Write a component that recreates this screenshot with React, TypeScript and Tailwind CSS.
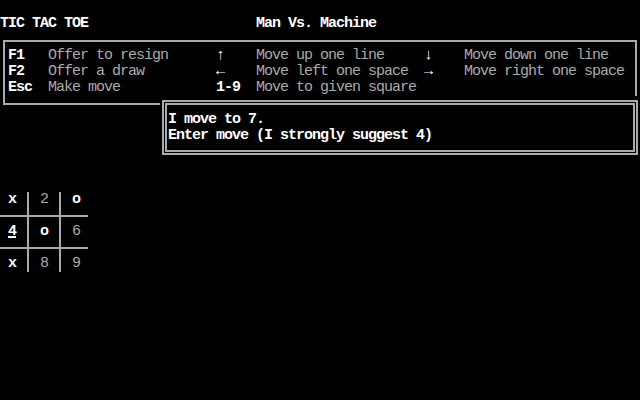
import * as React from 'react';

const GRAY = 'text-[#aaaaaa]';

const helpRows: [string, string, string, string, string, string][] = [
  ['F1', 'Offer to resign', '↑', 'Move up one line', '↓', 'Move down one line'],
  ['F2', 'Offer a draw', '←', 'Move left one space', '→', 'Move right one space'],
  ['Esc', 'Make move', '1-9', 'Move to given square', '', ''],
];

type Mark = { ch: string; lit: boolean; under?: boolean };

const board: Mark[][] = [
  [{ ch: 'x', lit: true }, { ch: '2', lit: false }, { ch: 'o', lit: true }],
  [{ ch: '4', lit: true, under: true }, { ch: 'o', lit: true }, { ch: '6', lit: false }],
  [{ ch: 'x', lit: true }, { ch: '8', lit: false }, { ch: '9', lit: false }],
];

const Sep: React.FC<{ cross?: boolean }> = ({ cross }) => (
  <div className="relative w-2 h-4 flex justify-center">
    <div className="w-[2px] h-full bg-[#aaaaaa]" />
    {cross && <div className="absolute left-0 right-0 top-[7px] h-[2px] bg-[#aaaaaa]" />}
  </div>
);

const LineRow: React.FC = () => (
  <div className="flex">
    <div className="w-6 h-4 flex items-center"><div className="w-full h-[2px] bg-[#aaaaaa]" /></div>
    <Sep cross />
    <div className="w-6 h-4 flex items-center"><div className="w-full h-[2px] bg-[#aaaaaa]" /></div>
    <Sep cross />
    <div className="w-6 h-4 flex items-center"><div className="w-full h-[2px] bg-[#aaaaaa]" /></div>
  </div>
);

const Cell: React.FC<{ m: Mark }> = ({ m }) => (
  <div className={`w-6 h-4 text-center ${m.lit ? 'text-white font-bold' : GRAY}`}>
    <span className={m.under ? 'underline decoration-2 underline-offset-[1px]' : ''}>{m.ch}</span>
  </div>
);

export default function App() {
  return (
    <div
      className="w-[640px] h-[400px] bg-black overflow-hidden pt-4 text-[15px] leading-[16px] tracking-[-1px] whitespace-pre"
      style={{ fontFamily: '"Liberation Mono", "DejaVu Sans Mono", monospace' }}
    >
      <div className="flex h-4 text-white font-bold">
        <span className="w-[256px]">TIC TAC TOE</span>
        <span>Man Vs. Machine</span>
      </div>

      <div className="mt-2 ml-[3px] w-[634px] h-[65px] border-2 border-[#aaaaaa] pt-[6px] pl-[3px]">
        {helpRows.map((r, i) => (
          <div key={i} className="flex h-4">
            <span className="w-[40px] text-white font-bold">{r[0]}</span>
            <span className={`w-[168px] ${GRAY}`}>{r[1]}</span>
            <span className="w-[40px] text-white font-bold">{r[2]}</span>
            <span className={`w-[168px] ${GRAY}`}>{r[3]}</span>
            <span className="w-[40px] text-white font-bold">{r[4]}</span>
            <span className={GRAY}>{r[5]}</span>
          </div>
        ))}
      </div>

      <div className="relative ml-[160px] mt-[-9px] w-[480px] h-16 bg-black pt-1 pl-[2px]">
        <div className="w-[476px] h-[55px] border-2 border-[#aaaaaa] p-px">
          <div className="w-full h-full border-2 border-[#aaaaaa] pt-[7px] pl-px text-white font-bold">
            <div className="h-4">I move to 7.</div>
            <div className="h-4">Enter move (I strongly suggest 4)</div>
          </div>
        </div>
      </div>

      <div className="mt-8 flex flex-col">
        {board.map((row, i) => (
          <React.Fragment key={i}>
            <div className="flex">
              <Cell m={row[0]} />
              <Sep />
              <Cell m={row[1]} />
              <Sep />
              <Cell m={row[2]} />
            </div>
            {i < 2 && <LineRow />}
          </React.Fragment>
        ))}
      </div>
    </div>
  );
}
